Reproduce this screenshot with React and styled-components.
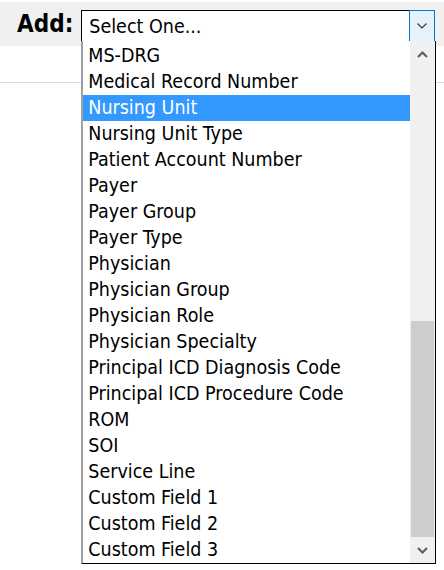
import React from "react";
import styled, { createGlobalStyle } from "styled-components";

const GlobalStyle = createGlobalStyle`
    html, body {
        margin: 0;
        padding: 0;
        background: #ffffff;
    }
    body {
        font-family: "DejaVu Sans Condensed", "DejaVu Sans", sans-serif;
        font-stretch: condensed;
    }
`;

const Page = styled.div`
    width: 444px;
    height: 570px;
    padding-top: 2px;
    box-sizing: border-box;
    overflow: hidden;
`;

const Toolbar = styled.div`
    position: relative;
    height: 44px;
    background: #f0f0f0;
    display: flex;
    align-items: flex-start;
    padding: 8px 0 0 17px;
    box-sizing: border-box;
    gap: 8px;
`;

const Label = styled.span`
    font-size: 24px;
    line-height: 32px;
    font-weight: bold;
    color: #000;
    margin-top: -2px;
`;

const Combo = styled.div`
    position: relative;
    width: 354px;
    height: 32px;
    box-sizing: border-box;
    border: 1px solid #000;
    background: #fff;
    display: flex;
    align-items: center;
`;

const ComboText = styled.span`
    flex: 1;
    padding-left: 7px;
    font-size: 19.5px;
    color: #000;
`;

const ComboButton = styled.div`
    width: 26px;
    height: 32px;
    margin: -1px -1px -1px 0;
    box-sizing: border-box;
    border: 1px solid #0078d7;
    background: #e5f1fb;
    display: flex;
    align-items: center;
    justify-content: center;
`;

const Divider = styled.div`
    height: 36px;
    border-bottom: 1px solid #d9d9d9;
`;

const List = styled.div`
    position: absolute;
    top: 30px;
    left: -1px;
    width: 355px;
    height: 523px;
    box-sizing: border-box;
    background: #fff;
    border-left: 2px solid #a0a0a0;
    border-right: 1px solid #000;
    border-bottom: 1px solid #000;
    display: flex;
    z-index: 2;
`;

const Items = styled.div`
    flex: 1;
    padding-top: 2px;
`;

const Item = styled.div`
    height: 26px;
    line-height: 26px;
    padding-left: 5px;
    font-size: 19.5px;
    white-space: nowrap;
    color: ${(p) => (p.$active ? "#fff" : "#000")};
    background: ${(p) => (p.$active ? "#3399ff" : "transparent")};
`;

const Scrollbar = styled.div`
    width: 25px;
    background: #f0f0f0;
    display: flex;
    flex-direction: column;
`;

const ArrowCell = styled.div`
    height: 26px;
    display: flex;
    align-items: center;
    justify-content: center;
`;

const Track = styled.div`
    flex: 1;
    display: flex;
    flex-direction: column;
    justify-content: flex-end;
    padding: 0 1px;
`;

const Thumb = styled.div`
    height: 216px;
    background: #cdcdcd;
`;

const items = [
    "MS-DRG",
    "Medical Record Number",
    "Nursing Unit",
    "Nursing Unit Type",
    "Patient Account Number",
    "Payer",
    "Payer Group",
    "Payer Type",
    "Physician",
    "Physician Group",
    "Physician Role",
    "Physician Specialty",
    "Principal ICD Diagnosis Code",
    "Principal ICD Procedure Code",
    "ROM",
    "SOI",
    "Service Line",
    "Custom Field 1",
    "Custom Field 2",
    "Custom Field 3",
];

const Chevron = ({ up }) => (
    <svg width="11" height="7" viewBox="0 0 11 7">
        <path
            d={up ? "M1 6 L5.5 1.5 L10 6" : "M1 1 L5.5 5.5 L10 1"}
            fill="none"
            stroke="#606060"
            strokeWidth="2.2"
        />
    </svg>
);

export default function App() {
    return (
        <Page>
            <GlobalStyle />
            <Toolbar>
                <Label>Add:</Label>
                <Combo>
                    <ComboText>Select One...</ComboText>
                    <ComboButton>
                        <svg width="10" height="6" viewBox="0 0 10 6">
                            <path d="M0.5 0.5 L5 5 L9.5 0.5" fill="none" stroke="#333" strokeWidth="1.1" />
                        </svg>
                    </ComboButton>
                    <List>
                        <Items>
                            {items.map((it) => (
                                <Item key={it} $active={it === "Nursing Unit"}>{it}</Item>
                            ))}
                        </Items>
                        <Scrollbar>
                            <ArrowCell><Chevron up /></ArrowCell>
                            <Track><Thumb /></Track>
                            <ArrowCell><Chevron /></ArrowCell>
                        </Scrollbar>
                    </List>
                </Combo>
            </Toolbar>
            <Divider />
        </Page>
    );
}
